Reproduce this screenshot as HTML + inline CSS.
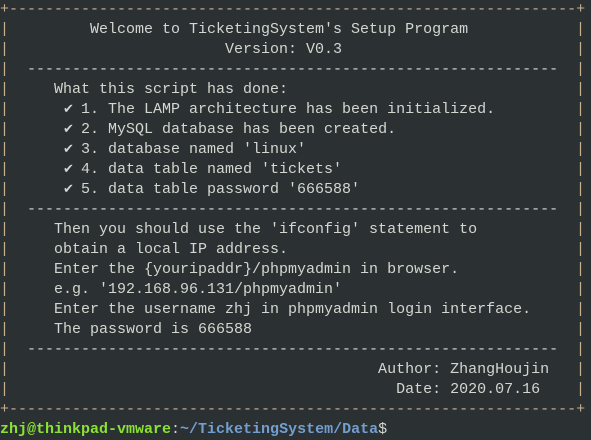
<!DOCTYPE html>
<html><head><meta charset="utf-8"><style>
html,body{margin:0;padding:0;background:#2b3033;width:591px;height:439px;overflow:hidden}
#w{position:absolute;left:0;top:0;font-family:"Liberation Mono","DejaVu Sans Mono",monospace;font-size:15px;line-height:20px;color:#d3d7cf}
.l{position:relative;height:20px;width:591px;white-space:pre}
.l::before{content:"|";position:absolute;left:0;top:0;color:#c9b08f}
.l::after{content:"|";position:absolute;left:576px;top:0;color:#c9b08f}
.n::before,.n::after{content:none}
.b{color:#c9b08f}
.c{display:inline-block;width:9px;font-family:"DejaVu Sans",sans-serif;font-size:13px}
.g{color:#8ae234;font-weight:bold}
.u{color:#729fcf;font-weight:bold}
</style></head><body><div id="w">
<div class="l n"><span class="b">+---------------------------------------------------------------+</span></div>
<div class="l">          Welcome to TicketingSystem's Setup Program</div>
<div class="l">                         Version: V0.3</div>
<div class="l">   -----------------------------------------------------------</div>
<div class="l">      What this script has done:</div>
<div class="l">       <span class="c">✔</span> 1. The LAMP architecture has been initialized.</div>
<div class="l">       <span class="c">✔</span> 2. MySQL database has been created.</div>
<div class="l">       <span class="c">✔</span> 3. database named 'linux'</div>
<div class="l">       <span class="c">✔</span> 4. data table named 'tickets'</div>
<div class="l">       <span class="c">✔</span> 5. data table password '666588'</div>
<div class="l">   -----------------------------------------------------------</div>
<div class="l">      Then you should use the 'ifconfig' statement to</div>
<div class="l">      obtain a local IP address.</div>
<div class="l">      Enter the {youripaddr}/phpmyadmin in browser.</div>
<div class="l">      e.g. '192.168.96.131/phpmyadmin'</div>
<div class="l">      Enter the username zhj in phpmyadmin login interface.</div>
<div class="l">      The password is 666588</div>
<div class="l">   -----------------------------------------------------------</div>
<div class="l">                                          Author: ZhangHoujin</div>
<div class="l">                                            Date: 2020.07.16</div>
<div class="l n"><span class="b">+---------------------------------------------------------------+</span></div>
<div class="l n"><span class="g">zhj@thinkpad-vmware</span>:<span class="u">~/TicketingSystem/Data</span>$</div>
</div></body></html>
